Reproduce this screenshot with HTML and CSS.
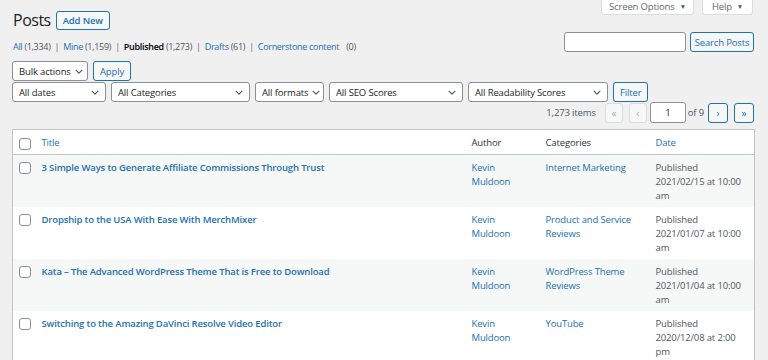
FILE: index.html
```html
<!DOCTYPE html>
<html lang="en">
<head>
  <meta charset="UTF-8">
  <meta name="viewport" content="width=device-width, initial-scale=1.0">
  <title>Posts</title>
  <link rel="stylesheet" href="styles.css">
</head>
<body>

  <div class="wrap">
    <!-- Heading + screen tabs -->
    <div class="top-row">
      <div class="heading">
        <h1>Posts</h1>
        <a class="btn add-new" href="#">Add New</a>
      </div>
      <div class="screen-tabs">
        <div class="tab tab-options">Screen Options <span class="caret">&#9660;</span></div>
        <div class="tab tab-help">Help <span class="caret">&#9660;</span></div>
      </div>
    </div>

    <!-- Status links + search -->
    <div class="status-row">
      <ul class="subsubsub">
        <li><a href="#">All <span class="count">(1,334)</span></a> |</li>
        <li><a href="#">Mine <span class="count">(1,159)</span></a> |</li>
        <li><a class="current" href="#">Published <span class="count">(1,273)</span></a> |</li>
        <li><a href="#">Drafts <span class="count">(61)</span></a> |</li>
        <li><a href="#">Cornerstone content</a> <span class="count zero">(0)</span></li>
      </ul>
      <div class="search-box">
        <input class="search-input" type="text">
        <a class="btn search-btn" href="#">Search Posts</a>
      </div>
    </div>

    <!-- Bulk actions -->
    <div class="actions-row first">
      <div class="select w-bulk">Bulk actions <svg class="chev" viewBox="0 0 10 6"><path d="M1 1l4 4 4-4"/></svg></div>
      <a class="btn" href="#">Apply</a>
    </div>

    <!-- Filters -->
    <div class="actions-row">
      <div class="select w-dates">All dates <svg class="chev" viewBox="0 0 10 6"><path d="M1 1l4 4 4-4"/></svg></div>
      <div class="select w-cats">All Categories <svg class="chev" viewBox="0 0 10 6"><path d="M1 1l4 4 4-4"/></svg></div>
      <div class="select w-formats">All formats <svg class="chev" viewBox="0 0 10 6"><path d="M1 1l4 4 4-4"/></svg></div>
      <div class="select w-seo">All SEO Scores <svg class="chev" viewBox="0 0 10 6"><path d="M1 1l4 4 4-4"/></svg></div>
      <div class="select w-read">All Readability Scores <svg class="chev" viewBox="0 0 10 6"><path d="M1 1l4 4 4-4"/></svg></div>
      <a class="btn" href="#">Filter</a>
    </div>

    <!-- Pagination -->
    <div class="pagination">
      <span class="items">1,273 items</span>
      <span class="page-btn disabled">&laquo;</span>
      <span class="page-btn disabled">&lsaquo;</span>
      <span class="page-input">1</span>
      <span class="of">of 9</span>
      <a class="page-btn" href="#">&rsaquo;</a>
      <a class="page-btn" href="#">&raquo;</a>
    </div>

    <!-- Posts table -->
    <table class="posts">
      <colgroup>
        <col class="c-cb">
        <col class="c-title">
        <col class="c-author">
        <col class="c-cats">
        <col class="c-date">
      </colgroup>
      <thead>
        <tr>
          <th class="cell-cb"><span class="cb"></span></th>
          <th><a href="#">Title</a></th>
          <th>Author</th>
          <th>Categories</th>
          <th><a href="#">Date</a></th>
        </tr>
      </thead>
      <tbody>
        <tr>
          <td class="cell-cb"><span class="cb"></span></td>
          <td><a class="row-title" href="#">3 Simple Ways to Generate Affiliate Commissions Through Trust</a></td>
          <td class="author"><a href="#">Kevin Muldoon</a></td>
          <td><a href="#">Internet Marketing</a></td>
          <td class="date">Published<br>2021/02/15 at 10:00 am</td>
        </tr>
        <tr>
          <td class="cell-cb"><span class="cb"></span></td>
          <td><a class="row-title" href="#">Dropship to the USA With Ease With MerchMixer</a></td>
          <td class="author"><a href="#">Kevin Muldoon</a></td>
          <td><a href="#">Product and Service Reviews</a></td>
          <td class="date">Published<br>2021/01/07 at 10:00 am</td>
        </tr>
        <tr>
          <td class="cell-cb"><span class="cb"></span></td>
          <td><a class="row-title" href="#">Kata – The Advanced WordPress Theme That is Free to Download</a></td>
          <td class="author"><a href="#">Kevin Muldoon</a></td>
          <td><a href="#">WordPress Theme Reviews</a></td>
          <td class="date">Published<br>2021/01/04 at 10:00 am</td>
        </tr>
        <tr>
          <td class="cell-cb"><span class="cb"></span></td>
          <td><a class="row-title" href="#">Switching to the Amazing DaVinci Resolve Video Editor</a></td>
          <td class="author"><a href="#">Kevin Muldoon</a></td>
          <td><a href="#">YouTube</a></td>
          <td class="date">Published<br>2020/12/08 at 2:00 pm</td>
        </tr>
      </tbody>
    </table>
  </div>

</body>
</html>
```

FILE: styles.css
```css
:root {
  --link-color: #2271b1;
  --text-color: #3c434a;
  --title-color: #1d2327;
  --muted-color: #50575e;
  --border-color: #c3c4c7;
  --input-border: #8c8f94;
  --body-color: #f0f0f1;
  --stripe-color: #f6f7f7;
}

body {
  font-family: "Open Sans", "Noto Sans", sans-serif;
  font-size: 9.5px;
  letter-spacing: -0.15px;
  margin: 0;
  padding: 0;
  background-color: var(--body-color);
  color: var(--text-color);
  overflow: hidden;
  white-space: nowrap;
}

a {
  color: var(--link-color);
  text-decoration: none;
}

.wrap {
  padding: 0 14px 0 12px;
}

/* Heading row */
.top-row {
  display: flex;
  justify-content: space-between;
  align-items: flex-start;
  height: 32px;
}

.heading {
  display: flex;
  align-items: center;
  gap: 5px;
  padding-top: 10px;
  padding-left: 1px;
}

.heading h1 {
  margin: 0;
  font-size: 16px;
  font-weight: 400;
  letter-spacing: -0.5px;
  color: var(--title-color);
  line-height: 20px;
}

.btn {
  display: inline-flex;
  align-items: center;
  justify-content: center;
  height: 20px;
  box-sizing: border-box;
  padding: 0 7px;
  border: 1px solid var(--link-color);
  border-radius: 3px;
  background-color: var(--stripe-color);
  color: var(--link-color);
}

.add-new {
  height: 19px;
  font-weight: 600;
  padding: 0 6px;
}

.screen-tabs {
  display: flex;
  gap: 8px;
  margin-top: -4px;
  margin-right: 1px;
}

.tab {
  display: flex;
  align-items: center;
  justify-content: center;
  height: 19px;
  box-sizing: border-box;
  padding-top: 3px;
  background-color: #fff;
  border: 1px solid #dcdcde;
  border-top: none;
  border-radius: 0 0 3px 3px;
  color: #646970;
}

.tab-options { width: 93px; }
.tab-help { width: 51px; }

.caret {
  font-size: 6.5px;
  margin-left: 5px;
  color: #50575e;
}

/* Status links + search */
.status-row {
  display: flex;
  justify-content: space-between;
  align-items: flex-start;
}

.subsubsub {
  display: flex;
  gap: 4px;
  list-style: none;
  margin: 8px 0 0 1px;
  padding: 0;
  color: #646970;
  font-size: 9px;
  letter-spacing: -0.3px;
}

.subsubsub a {
  margin-right: 2px;
}

.subsubsub .count {
  color: #50575e;
}

.subsubsub .zero {
  margin-left: 3px;
}

.subsubsub .current {
  color: #000;
  font-weight: 600;
}

.subsubsub .current .count {
  font-weight: 400;
}

.search-box {
  display: flex;
  gap: 4px;
}

.search-input {
  width: 122px;
  height: 20px;
  box-sizing: border-box;
  border: 1px solid var(--input-border);
  border-radius: 3px;
  background-color: #fff;
  margin: 0;
}

.search-btn {
  width: 64px;
  padding: 0;
}

/* Action / filter rows */
.actions-row {
  display: flex;
  gap: 5px;
  margin-top: 1px;
}

.actions-row.first {
  margin-top: 8px;
}

.select {
  display: flex;
  align-items: center;
  justify-content: space-between;
  gap: 4px;
  height: 20px;
  box-sizing: border-box;
  padding: 0 6px 0 6px;
  border: 1px solid var(--input-border);
  border-radius: 3px;
  background-color: #fff;
  color: var(--title-color);
}

.chev {
  flex: none;
  width: 8px;
  height: 5px;
  fill: none;
  stroke: var(--muted-color);
  stroke-width: 1.4;
}

.w-bulk { width: 76px; }
.w-dates { width: 94px; }
.w-cats { width: 139px; }
.w-formats { width: 69px; padding-right: 4px; }
.w-seo { width: 134px; }
.w-read { width: 140px; }

.actions-row .btn {
  padding: 0 6px;
}

/* Pagination */
.pagination {
  display: flex;
  justify-content: flex-end;
  align-items: center;
  gap: 6px;
  margin-top: 0;
  color: var(--muted-color);
}

.items {
  margin-right: 3px;
}

.page-btn {
  display: inline-flex;
  align-items: center;
  justify-content: center;
  width: 20px;
  height: 20px;
  box-sizing: border-box;
  border: 1px solid var(--link-color);
  border-radius: 3px;
  background-color: var(--stripe-color);
  color: var(--link-color);
  font-size: 10px;
}

.page-btn.disabled {
  width: 18px;
  border-color: #dcdcde;
  color: #a7aaad;
}

.page-input {
  display: inline-flex;
  align-items: center;
  justify-content: center;
  width: 36px;
  height: 21px;
  box-sizing: border-box;
  border: 1px solid var(--input-border);
  border-radius: 3px;
  background-color: #fff;
  color: var(--title-color);
  margin-left: -3px;
}

.of {
  margin: 0 -2px 0 -4px;
}

/* Posts table */
.posts {
  width: 742px;
  margin-top: 6px;
  border-collapse: collapse;
  border: 1px solid var(--border-color);
  background-color: #fff;
  table-layout: fixed;
}

.c-cb { width: 24px; }
.c-title { width: 430px; }
.c-author { width: 74px; }
.c-cats { width: 110px; }
.c-date { width: 104px; }

.posts th,
.posts td {
  text-align: left;
  vertical-align: top;
  font-weight: 400;
  line-height: 14px;
  padding: 6px 5px 4px;
  white-space: normal;
}

.posts th {
  height: 25px;
  box-sizing: border-box;
  padding: 6px 5px 0;
  color: #2c3338;
  border-bottom: 1px solid var(--border-color);
}

.posts tbody tr {
  height: 52px;
}

.posts tbody tr:nth-child(odd) {
  background-color: var(--stripe-color);
}

.posts .cell-cb {
  padding-left: 6px;
  padding-right: 0;
}

.posts .author {
  padding-right: 10px;
}

.cb {
  display: block;
  width: 12px;
  height: 12px;
  box-sizing: border-box;
  margin-top: 1px;
  border: 1px solid var(--input-border);
  border-radius: 3px;
  background-color: #fff;
}

.posts th .cb {
  margin-top: 2px;
}

.row-title {
  font-weight: 600;
}

.date {
  color: var(--muted-color);
}
```
